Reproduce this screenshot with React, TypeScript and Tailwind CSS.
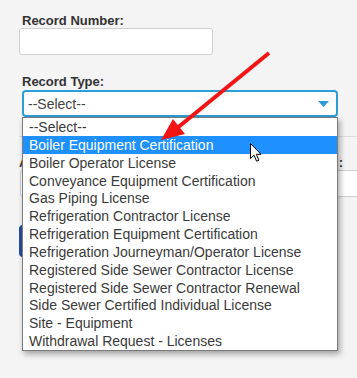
import React from "react";

const items = [
  "--Select--",
  "Boiler Equipment Certification",
  "Boiler Operator License",
  "Conveyance Equipment Certification",
  "Gas Piping License",
  "Refrigeration Contractor License",
  "Refrigeration Equipment Certification",
  "Refrigeration Journeyman/Operator License",
  "Registered Side Sewer Contractor License",
  "Registered Side Sewer Contractor Renewal",
  "Side Sewer Certified Individual License",
  "Site - Equipment",
  "Withdrawal Request - Licenses",
];

export default function App() {
  return (
    <div className="relative w-[357px] h-[378px] overflow-hidden bg-[#f4f4f4] font-['Liberation_Sans',Arial,sans-serif]">
      <div className="flex flex-col items-start pl-[19px] pt-[13px]">
        <label className="pl-[3px] text-[13px] font-bold leading-[15px] text-[#333]">Record Number:</label>
        <div className="w-[194px] h-[27px] bg-white border border-[#cfcfcf] rounded-[3px]" />
        <label className="mt-[19px] pl-[3px] text-[13px] font-bold leading-[15px] text-[#333]">Record Type:</label>
        <div className="mt-[1px] ml-[3px] w-[316px] h-[27px] bg-white border-2 border-[#2b9ed8] rounded-[4px] flex items-center justify-between pl-[4px] pr-[7px]">
          <span className="text-[14px] text-[#444] leading-[18px]">--Select--</span>
          <svg width="11" height="6" viewBox="0 0 11 6">
            <polygon points="0,0 11,0 5.5,6" fill="#2b9ed8" />
          </svg>
        </div>
        <div className="mt-[19px] w-[338px] h-px bg-[#dcdcdc]" />
        <div className="mt-[18px] w-[324px] flex justify-between text-[13px] font-bold leading-[15px] text-[#333]">
          <span>A</span>
          <span>:</span>
        </div>
        <div className="ml-[1px] w-[345px] h-[27px] bg-white border border-[#cfcfcf] rounded-[3px]" />
        <div className="mt-[28px] w-[120px] h-[32px] bg-[#284c9a] rounded-[4px]" />
      </div>

      <div className="absolute left-[22px] top-[117px] w-[316px] bg-white border border-[#7a7a7a] shadow-[2px_3px_6px_rgba(0,0,0,0.35)]">
        {items.map((t, i) => (
          <div
            key={t}
            className={
              i === 1
                ? "h-[17.85px] pl-[6px] text-[14px] leading-[18px] whitespace-nowrap bg-[#1e90ff] text-white"
                : "h-[17.85px] pl-[6px] text-[14px] leading-[18px] whitespace-nowrap text-[#3a3a3a]"
            }
          >
            {t}
          </div>
        ))}
      </div>

      <svg className="absolute left-0 top-0 pointer-events-none" width="357" height="378" viewBox="0 0 357 378">
        <line x1="269" y1="53" x2="176" y2="129" stroke="#f31414" strokeWidth="4" />
        <polygon points="161,140 173,119 185,134" fill="#f31414" />
      </svg>

      <svg className="absolute left-[250px] top-[143px] pointer-events-none" width="14" height="20" viewBox="0 0 14 20">
        <path d="M0.5 0.5 L0.5 15.5 L4 12.2 L6.6 18.2 L8.9 17.2 L6.3 11.3 L11 11.3 Z" fill="white" stroke="black" strokeWidth="1" strokeLinejoin="miter" />
      </svg>
    </div>
  );
}
